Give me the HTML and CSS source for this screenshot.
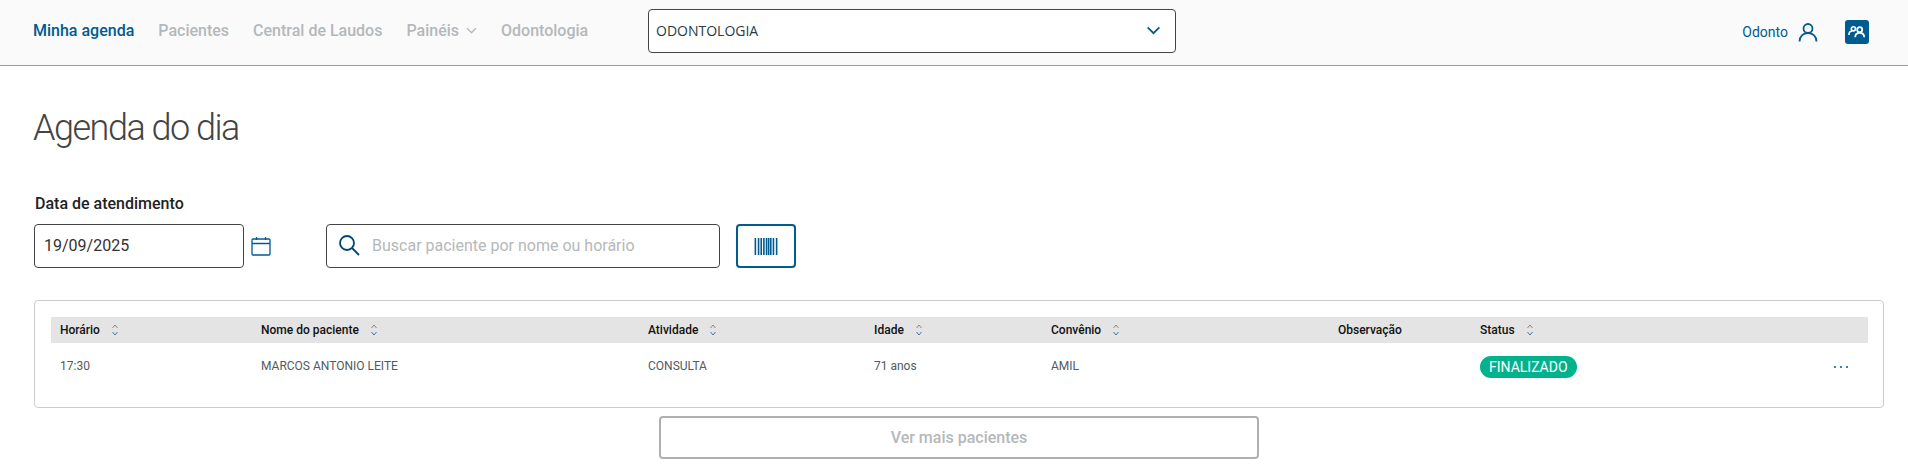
FILE: index.html
```html
<!DOCTYPE html>
<html lang="pt-BR">
<head>
    <meta charset="UTF-8">
    <title>Agenda do dia</title>
    <link rel="stylesheet" href="styles.css">
</head>
<body>
    <header class="topbar">
        <nav class="nav">
            <a class="nav-link active">Minha agenda</a>
            <a class="nav-link">Pacientes</a>
            <a class="nav-link">Central de Laudos</a>
            <a class="nav-link">Painéis
                <svg class="nav-caret" viewBox="0 0 10 6" width="11" height="7"><path d="M1 1l4 4 4-4" fill="none" stroke="#b5b8ba" stroke-width="1.2"/></svg>
            </a>
            <a class="nav-link">Odontologia</a>
        </nav>
        <div class="unit-select">
            <span>ODONTOLOGIA</span>
            <svg viewBox="0 0 16 10" width="15" height="9"><path d="M1.5 1.5L8 8l6.500-6.500" fill="none" stroke="#005b8e" stroke-width="2"/></svg>
        </div>
        <div class="user-area">
            <span class="user-name">Odonto</span>
            <svg class="user-icon" viewBox="0 0 20 20" width="20" height="20"><circle cx="10" cy="6.500" r="4.500" fill="none" stroke="#005b8e" stroke-width="1.800"/><path d="M1.500 19.500c0-5 3.500-8.500 8.500-8.500s8.500 3.500 8.500 8.500" fill="none" stroke="#005b8e" stroke-width="1.800"/></svg>
            <div class="team-btn">
                <svg viewBox="0 0 20 14" width="18" height="13"><circle cx="6" cy="4" r="2.300" fill="none" stroke="#fff" stroke-width="1.800"/><path d="M1 11c0-3 2-4.500 4-4.500" fill="none" stroke="#fff" stroke-width="1.800"/><circle cx="13" cy="5" r="2.800" fill="none" stroke="#fff" stroke-width="1.900"/><path d="M8 13.500c0-3.500 2-5 5-5s5 1.500 5 5" fill="none" stroke="#fff" stroke-width="1.900"/></svg>
            </div>
        </div>
    </header>

    <main class="content">
        <h1>Agenda do dia</h1>
        <label class="date-label">Data de atendimento</label>
        <div class="filters">
            <div class="field date-field">19/09/2025</div>
            <svg class="calendar" viewBox="0 0 20 20" width="20" height="20"><rect x="1" y="3" width="18" height="16" rx="1" fill="none" stroke="#005b8e" stroke-width="1.300"/><path d="M1 7.500h18M5.500 1v3M14.500 1v3" fill="none" stroke="#005b8e" stroke-width="1.300"/></svg>
            <div class="field search-field">
                <svg viewBox="0 0 22 22" width="22" height="22"><circle cx="9" cy="9" r="7" fill="none" stroke="#00466e" stroke-width="1.800"/><path d="M14 14l7 7" stroke="#00466e" stroke-width="1.800"/></svg>
                <span>Buscar paciente por nome ou horário</span>
            </div>
            <div class="barcode-btn">
                <svg viewBox="0 0 22 16" width="24" height="17"><path d="M1 0v16M4 0v16M6.500 0v16M9 0v16M11.500 0v16M13.500 0v16M15.500 0v16M18 0v16M21 0v16" stroke="#005b8e" stroke-width="1.500"/></svg>
            </div>
        </div>

        <section class="card">
            <div class="grid-row head-row">
                <div class="th">Horário <svg class="sort" viewBox="0 0 8 14" width="8" height="14"><path d="M1.500 5L4 2l2.500 3" fill="none" stroke="#888" stroke-width="1"/><path d="M1.500 9L4 12l2.500-3" fill="none" stroke="#3f7ba3" stroke-width="1"/></svg></div>
                <div class="th">Nome do paciente <svg class="sort" viewBox="0 0 8 14" width="8" height="14"><path d="M1.500 5L4 2l2.500 3" fill="none" stroke="#888" stroke-width="1"/><path d="M1.500 9L4 12l2.500-3" fill="none" stroke="#3f7ba3" stroke-width="1"/></svg></div>
                <div class="th">Atividade <svg class="sort" viewBox="0 0 8 14" width="8" height="14"><path d="M1.500 5L4 2l2.500 3" fill="none" stroke="#888" stroke-width="1"/><path d="M1.500 9L4 12l2.500-3" fill="none" stroke="#3f7ba3" stroke-width="1"/></svg></div>
                <div class="th">Idade <svg class="sort" viewBox="0 0 8 14" width="8" height="14"><path d="M1.500 5L4 2l2.500 3" fill="none" stroke="#888" stroke-width="1"/><path d="M1.500 9L4 12l2.500-3" fill="none" stroke="#3f7ba3" stroke-width="1"/></svg></div>
                <div class="th">Convênio <svg class="sort" viewBox="0 0 8 14" width="8" height="14"><path d="M1.500 5L4 2l2.500 3" fill="none" stroke="#888" stroke-width="1"/><path d="M1.500 9L4 12l2.500-3" fill="none" stroke="#3f7ba3" stroke-width="1"/></svg></div>
                <div class="th">Observação</div>
                <div class="th">Status <svg class="sort" viewBox="0 0 8 14" width="8" height="14"><path d="M1.500 5L4 2l2.500 3" fill="none" stroke="#888" stroke-width="1"/><path d="M1.500 9L4 12l2.500-3" fill="none" stroke="#3f7ba3" stroke-width="1"/></svg></div>
                <div></div>
            </div>
            <div class="grid-row body-row">
                <div>17:30</div>
                <div>MARCOS ANTONIO LEITE</div>
                <div>CONSULTA</div>
                <div>71 anos</div>
                <div>AMIL</div>
                <div></div>
                <div><span class="status">FINALIZADO</span></div>
                <div class="dots"><i></i><i></i><i></i></div>
            </div>
        </section>

        <div class="more-wrap">
            <div class="more-btn">Ver mais pacientes</div>
        </div>
    </main>
</body>
</html>
```

FILE: styles.css
```css
html, body {
    margin: 0;
    height: 472px;
    overflow: hidden;
}
body {
    font-family: Roboto, sans-serif;
    background-color: #ffffff;
    color: #333;
}
.topbar {
    display: flex;
    align-items: center;
    height: 65px;
    padding: 0 39px 0 33px;
    background-color: #fafafa;
    border-bottom: 1px solid #999;
}
.nav {
    display: flex;
    align-items: center;
    gap: 24px;
    width: 615px;
    margin-bottom: 4px;
}
.nav-link {
    font-size: 16px;
    font-weight: 500;
    color: #b5b8ba;
}
.nav-link.active {
    color: #005b8e;
}
.nav-caret {
    margin-left: 3px;
    vertical-align: 2px;
}
.unit-select {
    display: flex;
    align-items: center;
    justify-content: space-between;
    width: 528px;
    height: 44px;
    box-sizing: border-box;
    margin-bottom: 3px;
    padding: 0 14px 2px 7px;
    background-color: #ffffff;
    border: 1px solid #444;
    border-radius: 4px;
    font-family: "Open Sans", sans-serif;
    font-size: 14px;
    color: #2a3a44;
}
.user-area {
    display: flex;
    align-items: center;
    margin-left: auto;
    margin-bottom: 2px;
}
.user-name {
    font-size: 14px;
    color: #005b8e;
}
.user-icon {
    margin-left: 10px;
}
.team-btn {
    display: flex;
    align-items: center;
    justify-content: center;
    width: 24px;
    height: 24px;
    margin-left: 27px;
    background-color: #005b8e;
    border-radius: 3px;
}
.content {
    padding: 0 24px 0 34px;
}
h1 {
    margin: 40px 0 0 -1px;
    height: 44px;
    font-size: 36px;
    line-height: 44px;
    font-weight: 300;
    color: #444;
    letter-spacing: -1.5px;
}
.date-label {
    display: block;
    margin-top: 44px;
    padding-left: 1px;
    font-size: 16px;
    line-height: 20px;
    font-weight: 500;
    color: #222;
}
.filters {
    display: flex;
    align-items: center;
    margin-top: 10px;
}
.field {
    display: flex;
    align-items: center;
    height: 44px;
    box-sizing: border-box;
    padding-bottom: 2px;
    background-color: #ffffff;
    border: 1px solid #444;
    border-radius: 4px;
}
.date-field {
    width: 210px;
    padding-left: 9px;
    font-size: 16px;
    color: #333;
}
.calendar {
    margin: 0 0 0 7px;
}
.search-field {
    width: 394px;
    margin-left: 55px;
    padding-left: 11px;
    gap: 12px;
    font-size: 16px;
    color: #b5b8ba;
}
.barcode-btn {
    display: flex;
    align-items: center;
    justify-content: center;
    width: 60px;
    height: 44px;
    box-sizing: border-box;
    margin-left: 16px;
    border: 2px solid #005b8e;
    border-radius: 4px;
}
.card {
    height: 108px;
    box-sizing: border-box;
    margin-top: 32px;
    padding: 16px 15px 0 16px;
    border: 1px solid #ccc;
    border-radius: 4px;
}
.grid-row {
    display: grid;
    grid-template-columns: 201px 387px 226px 177px 287px 142px 1fr 34px;
    padding-left: 9px;
    align-items: center;
    font-size: 12px;
}
.head-row {
    height: 26px;
    background-color: #e4e4e4;
}
.th {
    display: flex;
    align-items: center;
    gap: 11px;
    font-weight: 500;
    color: #111;
}
.body-row {
    height: 46px;
    color: #4f5b62;
}
.status {
    display: inline-block;
    margin-top: 2px;
    padding: 0 9px;
    height: 22px;
    line-height: 22px;
    background-color: #00b38d;
    border-radius: 11px;
    color: #ffffff;
    font-size: 14px;
}
.dots {
    display: flex;
    gap: 4px;
    margin-top: 1px;
}
.dots i {
    width: 2px;
    height: 2px;
    border-radius: 50%;
    background-color: #005b8e;
}
.more-wrap {
    display: flex;
    justify-content: center;
    margin-top: 8px;
}
.more-btn {
    width: 600px;
    height: 43px;
    box-sizing: border-box;
    line-height: 39px;
    text-align: center;
    border: 2px solid #b0b0b0;
    border-radius: 4px;
    font-size: 16px;
    font-weight: 500;
    color: #b5b8ba;
}
```
